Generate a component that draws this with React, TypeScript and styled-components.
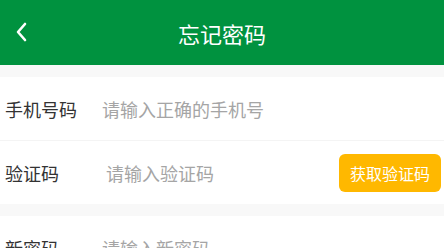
import styled, { createGlobalStyle } from "styled-components";

const GlobalStyle = createGlobalStyle`
  body {
    margin: 0;
    background: #ffffff;
    font-family: "Noto Sans CJK SC", "Noto Sans", sans-serif;
  }
`;

const Page = styled.div`
  width: 444px;
  height: 248px;
  overflow: hidden;
  background: #ffffff;
`;

const Header = styled.header`
  height: 65px;
  background: #00923f;
  display: flex;
  align-items: center;
  justify-content: center;
  position: relative;
`;

const BackButton = styled.button`
  position: absolute;
  left: 10px;
  top: 18px;
  width: 22px;
  height: 28px;
  padding: 0;
  border: none;
  background: transparent;
  display: flex;
  align-items: center;
  justify-content: center;
`;

const Title = styled.h1`
  margin: 0;
  color: #ffffff;
  font-size: 22px;
  font-weight: 400;
  line-height: 1;
`;

const Spacer = styled.div`
  height: 12px;
  background: #f8f8f8;
`;

const Row = styled.div<{ $divider?: boolean }>`
  height: 63px;
  display: flex;
  align-items: center;
  padding-left: 5px;
  padding-right: 3px;
  border-bottom: ${(p) => (p.$divider ? "1px solid #f4f4f4" : "none")};
`;

const Label = styled.span<{ $width: number }>`
  width: ${(p) => p.$width}px;
  flex-shrink: 0;
  color: #333333;
  font-size: 18px;
  line-height: 1;
`;

const Field = styled.input`
  flex: 1;
  min-width: 0;
  border: none;
  outline: none;
  padding: 0;
  background: transparent;
  font-family: inherit;
  font-size: 18px;
  color: #333333;

  &::placeholder {
    color: #a5a5a5;
  }
`;

const CodeButton = styled.button`
  width: 102px;
  height: 38px;
  border: none;
  border-radius: 6px;
  background: #ffb800;
  color: #ffffff;
  font-family: inherit;
  font-size: 16px;
  padding: 0;
  flex-shrink: 0;
`;

export default function App() {
  return (
    <Page>
      <GlobalStyle />
      <Header>
        <BackButton aria-label="返回">
          <svg width="14" height="22" viewBox="0 0 14 22">
            <path
              d="M11 3 L4 11 L11 19"
              fill="none"
              stroke="#ffffff"
              strokeWidth="2.6"
              strokeLinecap="round"
              strokeLinejoin="round"
            />
          </svg>
        </BackButton>
        <Title>忘记密码</Title>
      </Header>
      <Spacer />
      <Row $divider>
        <Label $width={97}>手机号码</Label>
        <Field placeholder="请输入正确的手机号" />
      </Row>
      <Row>
        <Label $width={101}>验证码</Label>
        <Field placeholder="请输入验证码" />
        <CodeButton>获取验证码</CodeButton>
      </Row>
      <Spacer />
      <Row>
        <Label $width={97}>新密码</Label>
        <Field type="password" placeholder="请输入新密码" />
      </Row>
    </Page>
  );
}
